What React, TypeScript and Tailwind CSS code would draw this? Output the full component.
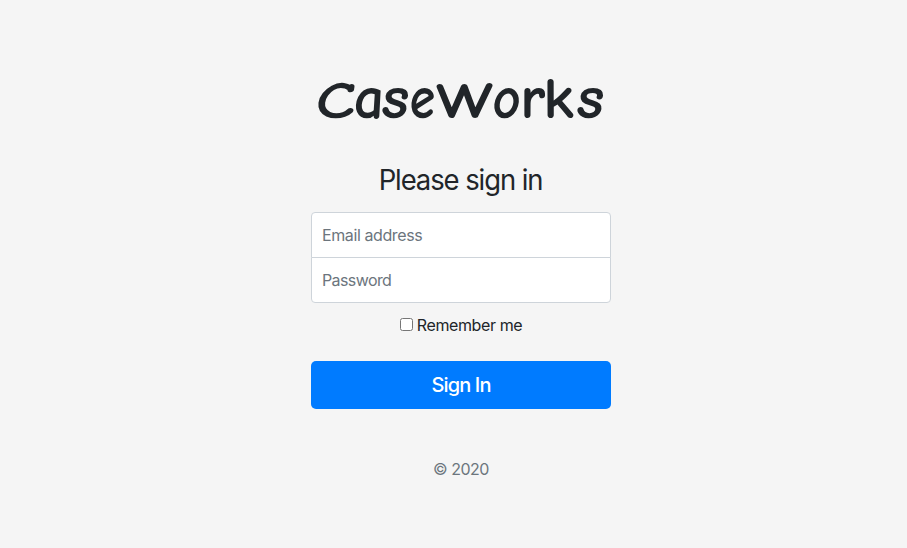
export default function App() {
  return (
    <div className="flex min-h-screen items-start justify-center bg-[#f5f5f5] pl-[15px] font-['Inter','Liberation_Sans',sans-serif] text-[#212529]">
      <form className="flex w-[300px] flex-col items-center pt-[70px]">
        <h1 className="flex h-[58px] items-baseline justify-center font-['Comic_Neue','Comic_Sans_MS',cursive] text-[61px] leading-[56px] font-bold whitespace-nowrap">
          <span className="inline-block w-[38px] origin-left scale-x-[1.28] -skew-x-6 text-[52px]">C</span>
          <span className="inline-block w-[28px] origin-left scale-x-[0.98] -skew-x-3">a</span>
          <span className="inline-block w-[28px] origin-left scale-x-[1.07] -skew-x-6">s</span>
          <span className="inline-block w-[26px] origin-left scale-x-[0.85] -skew-x-6">e</span>
          <span className="inline-block w-[57px] origin-left scale-x-[1.34] text-[50px]">W</span>
          <span className="inline-block w-[27px] origin-left scale-x-[0.9] -skew-x-6">o</span>
          <span className="inline-block w-[23px] origin-left scale-x-[1.03]">r</span>
          <span className="inline-block w-[34px] origin-left scale-x-[1.08] text-[59px]">k</span>
          <span className="inline-block w-[29px] origin-left scale-x-[1.07] -skew-x-6">s</span>
        </h1>
        <h2 className="mt-[35px] scale-x-[0.98] text-[28px] leading-[35px] whitespace-nowrap tracking-[-1.1px]">Please sign in</h2>
        <input type="email" placeholder="Email address" className="mt-[14px] h-[46px] w-full rounded-t border border-[#ced4da] bg-white px-[10px] text-base tracking-[-0.4px] placeholder:text-[#6c757d]" />
        <input type="password" placeholder="Password" className="-mt-px h-[46px] w-full rounded-b border border-[#ced4da] bg-white px-[10px] text-base tracking-[-0.6px] placeholder:text-[#6c757d]" />
        <label className="mt-[10px] flex h-6 items-center gap-1 text-base tracking-[-0.4px]">
          <input type="checkbox" className="-mt-[2px] size-[13px]" />
          Remember me
        </label>
        <button type="button" className="mt-6 h-12 w-full rounded-[5px] bg-[#007bff] text-xl font-medium tracking-[-0.85px] text-white">Sign In</button>
        <p className="mt-12 text-base leading-6 tracking-[-0.5px] text-[#6c757d]">© 2020</p>
      </form>
    </div>
  );
}
